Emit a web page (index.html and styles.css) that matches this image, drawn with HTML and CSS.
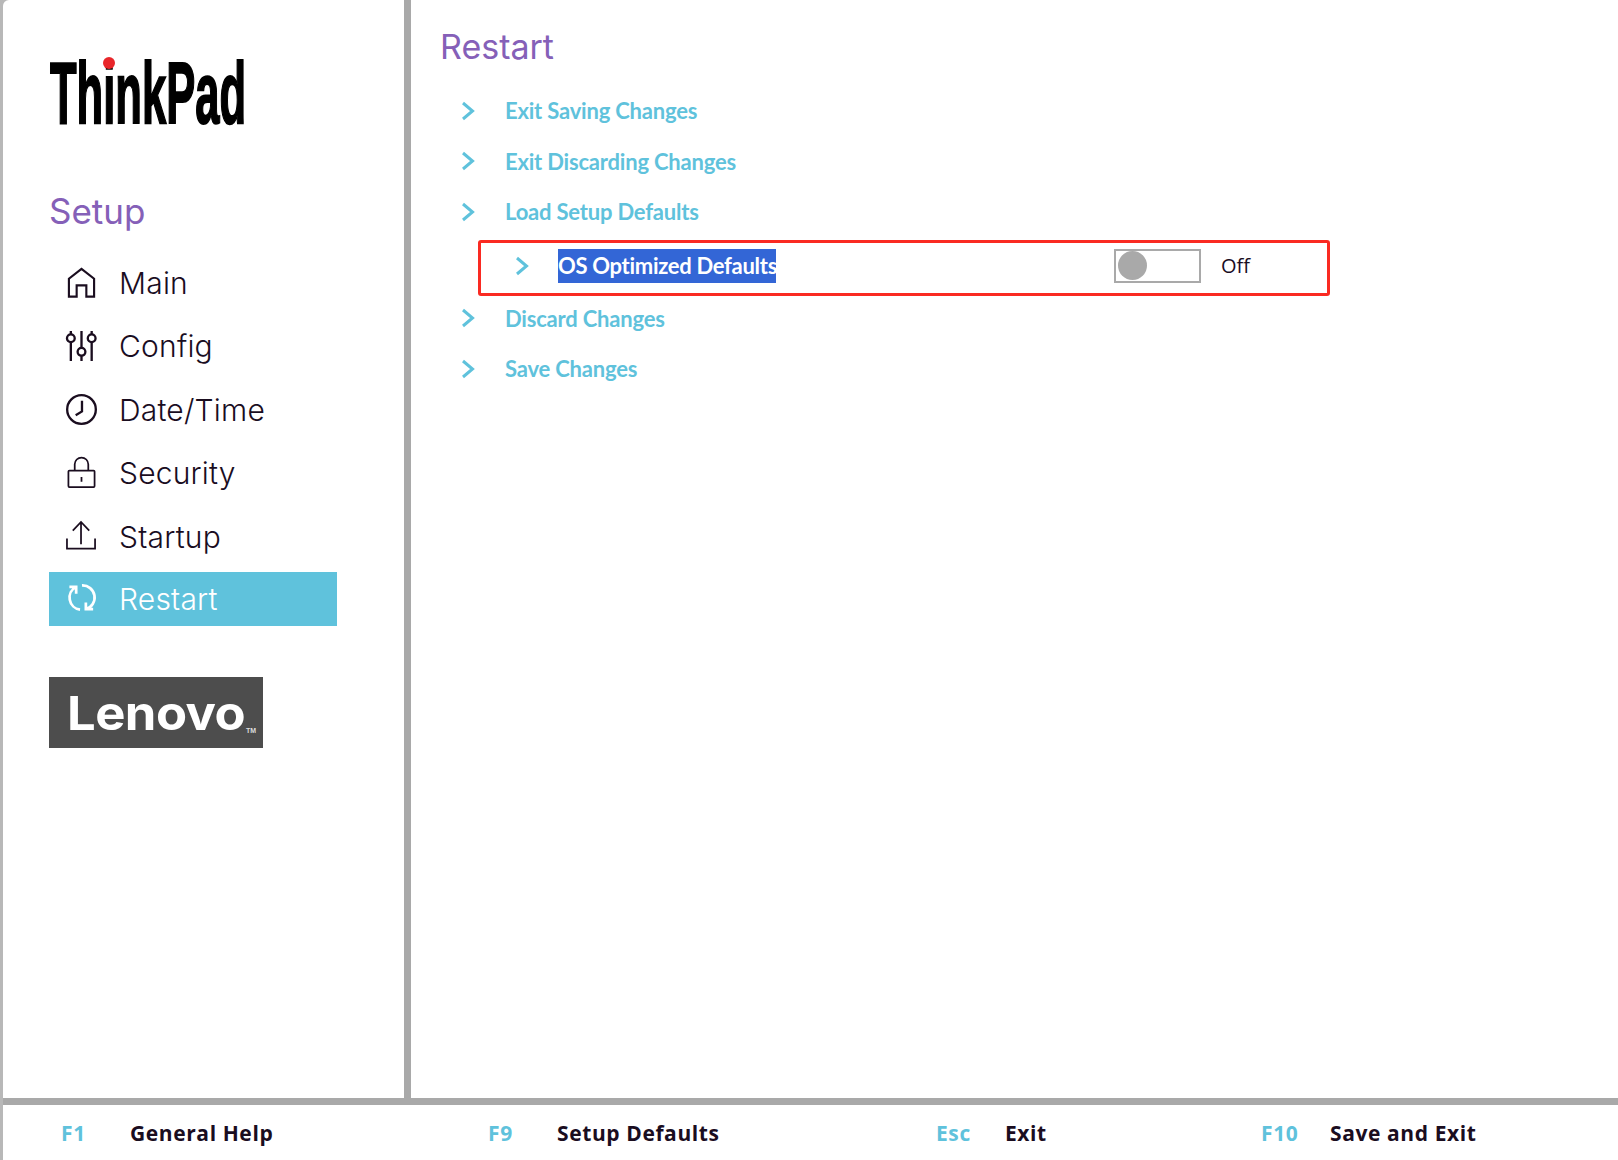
FILE: index.html
```html
<!DOCTYPE html>
<html lang="en">
<head>
<meta charset="utf-8">
<title>ThinkPad Setup</title>
<link rel="stylesheet" href="styles.css">
</head>
<body>
<div class="app">
  <div class="top">
    <aside class="sidebar">
      <svg class="logo" width="200" height="70" viewBox="0 0 200 70">
        <text class="logo-text" x="0" y="63.500" textLength="196" lengthAdjust="spacingAndGlyphs">ThinkPad</text>
        <circle class="logo-dot" cx="59" cy="4" r="6"/>
      </svg>
      <h2 class="setup">Setup</h2>
      <nav class="nav">
        <a class="nav-item">
          <svg class="nav-icon" viewBox="0 0 32 32"><path d="M3 29.500V11L16 1l13 10v18.500h-8V18H11v11.500z"/></svg>
          <span>Main</span>
        </a>
        <a class="nav-item">
          <svg class="nav-icon icon-bold" viewBox="0 0 32 32"><path d="M5 0v3.500M5 11.500V31M16 0v17.500M16 25.500V31M26.500 0v3.500M26.500 11.500V31"/><circle cx="5" cy="7.500" r="4"/><circle cx="16" cy="21.500" r="4"/><circle cx="26.500" cy="7.500" r="4"/></svg>
          <span>Config</span>
        </a>
        <a class="nav-item">
          <svg class="nav-icon icon-bold" viewBox="0 0 32 32"><circle cx="16" cy="16" r="14.800"/><path d="M16.500 7v11L10 22"/></svg>
          <span>Date/Time</span>
        </a>
        <a class="nav-item">
          <svg class="nav-icon icon-thin" viewBox="0 0 32 32"><rect x="2.500" y="13" width="27" height="17" rx="1"/><path d="M9 13V6.500a7 7 0 0 1 14 0V13M16 19.500v5"/></svg>
          <span>Security</span>
        </a>
        <a class="nav-item">
          <svg class="nav-icon icon-thin" viewBox="0 0 32 32"><path d="M1 18v10.500h29V18M15.500 24V1M7 10l8.500-9 8.500 9"/></svg>
          <span>Startup</span>
        </a>
        <a class="nav-item nav-active">
          <svg class="nav-icon" viewBox="0 0 32 32"><path d="M14.500 27.500A12.500 12.500 0 0 1 10.500 4M3.500 4h7v7M16.500 2.500A12.500 12.500 0 0 1 20.500 27M20.500 20v7h7.500"/></svg>
          <span>Restart</span>
        </a>
      </nav>
      <div class="lenovo"><span class="lenovo-name">Lenovo</span><span class="lenovo-tm">TM</span></div>
    </aside>
    <main class="content">
      <h1 class="title">Restart</h1>
      <ul class="menu">
        <li class="row">
          <svg class="chevron" viewBox="0 0 14 20"><path d="M2 2l9.500 8L2 18"/></svg>
          <span class="label">Exit Saving Changes</span>
        </li>
        <li class="row">
          <svg class="chevron" viewBox="0 0 14 20"><path d="M2 2l9.500 8L2 18"/></svg>
          <span class="label">Exit Discarding Changes</span>
        </li>
        <li class="row">
          <svg class="chevron" viewBox="0 0 14 20"><path d="M2 2l9.500 8L2 18"/></svg>
          <span class="label">Load Setup Defaults</span>
        </li>
        <li class="row row-selected">
          <svg class="chevron" viewBox="0 0 14 20"><path d="M2 2l9.500 8L2 18"/></svg>
          <span class="label label-selected">OS Optimized Defaults</span>
          <span class="toggle"><span class="knob"></span></span>
          <span class="state">Off</span>
        </li>
        <li class="row">
          <svg class="chevron" viewBox="0 0 14 20"><path d="M2 2l9.500 8L2 18"/></svg>
          <span class="label">Discard Changes</span>
        </li>
        <li class="row">
          <svg class="chevron" viewBox="0 0 14 20"><path d="M2 2l9.500 8L2 18"/></svg>
          <span class="label">Save Changes</span>
        </li>
      </ul>
    </main>
  </div>
  <footer class="footer">
    <div class="hint hint-a"><span class="key">F1</span><span class="desc">General Help</span></div>
    <div class="hint hint-b"><span class="key">F9</span><span class="desc">Setup Defaults</span></div>
    <div class="hint hint-c"><span class="key">Esc</span><span class="desc">Exit</span></div>
    <div class="hint"><span class="key">F10</span><span class="desc">Save and Exit</span></div>
  </footer>
</div>
</body>
</html>
```
FILE: styles.css
```css
* { box-sizing: border-box; }
html, body { margin: 0; height: 100%; overflow: hidden; }
body { background: linear-gradient(90deg, #b8b8b8, #dcdcdc); }
.app {
  margin-left: 3px; height: 1160px; display: flex; flex-direction: column;
  background: #fff; border-top-left-radius: 6px;
}
.top { flex: 1; display: flex; min-height: 0; }
.sidebar { width: 408px; flex: none; border-right: 7px solid #a9a9a9; padding: 59px 0 0 46px; }
.logo { display: block; margin-left: 1px; overflow: visible; }
.logo-text {
  font-family: "Liberation Sans", Arial, sans-serif; font-weight: 700; font-size: 88px;
  fill: #000; stroke: #000; stroke-width: 2px;
}
.logo-dot { fill: #e8262a; }
.setup {
  margin: 60px 0 0; font-family: Inter, sans-serif; font-weight: 400; font-size: 35px;
  line-height: 44px; color: #8560b8;
}
.nav { margin-top: 22px; display: flex; flex-direction: column; gap: 9.4px; width: 288px; }
.nav-item {
  height: 54px; display: flex; align-items: center; padding: 2px 0 0 17px; gap: 22px;
  font-family: Inter, sans-serif; font-size: 30px; font-weight: 300; letter-spacing: 0.2px; color: #1a0d1f;
}
.nav-icon { width: 31px; height: 31px; flex: none; fill: none; stroke: #1a0d1f; stroke-width: 2.2px; overflow: visible; }
.icon-bold { stroke-width: 2.4px; }
.icon-thin { stroke-width: 1.8px; }
.nav-active { background: #5fc2dc; color: #fff; padding-top: 0; }
.nav-active .nav-icon { stroke: #fff; stroke-width: 2.8px; }
.lenovo {
  margin-top: 51px; width: 214px; height: 71px; background: #4d4d4d; color: #fff;
  display: flex; align-items: flex-end; padding: 0 0 6px 18px;
}
.lenovo-name {
  font-family: Inter, sans-serif; font-weight: 700; font-size: 47px; line-height: 58px; letter-spacing: -0.5px;
  transform: scaleX(1.08); transform-origin: left center;
}
.lenovo-tm { font-family: "Liberation Sans", sans-serif; font-size: 7px; font-weight: 700; line-height: 8px; margin: 0 0 7px 14px; color: #ddd; }
.content { flex: 1; padding: 24px 0 0 29px; }
.title {
  margin: 0; font-family: Inter, sans-serif; font-weight: 400; font-size: 34px; line-height: 46px;
  color: #8560b8;
}
.menu { list-style: none; margin: 15.500px 0 0; padding: 0; }
.row {
  height: 50.500px; display: flex; align-items: center; padding-left: 21px;
  font-family: Lato, sans-serif; font-size: 22px; font-weight: 700; color: #5fc2dc;
}
.chevron { width: 14px; height: 20px; flex: none; fill: none; stroke: #5fc2dc; stroke-width: 3px; }
.label { margin-left: 30px; letter-spacing: -0.2px; }
.row-selected {
  width: 852px; height: 56px; margin: 2.500px 0 -2.500px 38px; padding: 0 0 4px 34px;
  border: 3px solid #fa2a22; border-radius: 3px;
}
.label-selected { background: #3366d6; color: #fff; line-height: 34px; margin-left: 29px; width: 218px; white-space: nowrap; letter-spacing: -0.3px; }
.toggle {
  margin-left: 338px; width: 87px; height: 34px; border: 2px solid #a9a9a9; padding: 1px 2px;
  display: flex; align-items: center;
}
.knob { width: 29px; height: 29px; border-radius: 50%; background: #a9a9a9; }
.state { margin-left: 20px; font-family: "Open Sans", sans-serif; font-size: 20px; font-weight: 400; color: #1a0d1f; }
.footer {
  flex: none; height: 62px; border-top: 7px solid #a9a9a9; display: flex; align-items: center;
  padding: 0 0 0 58px; font-family: "Open Sans", sans-serif; font-size: 21px; font-weight: 700;
  letter-spacing: 0.6px;
}
.hint { display: flex; align-items: center; }
.hint-a { width: 427px; }
.hint-b { width: 448px; }
.hint-c { width: 325px; }
.key { width: 69px; color: #5fc2dc; }
.desc { color: #1a0d1f; }
```
